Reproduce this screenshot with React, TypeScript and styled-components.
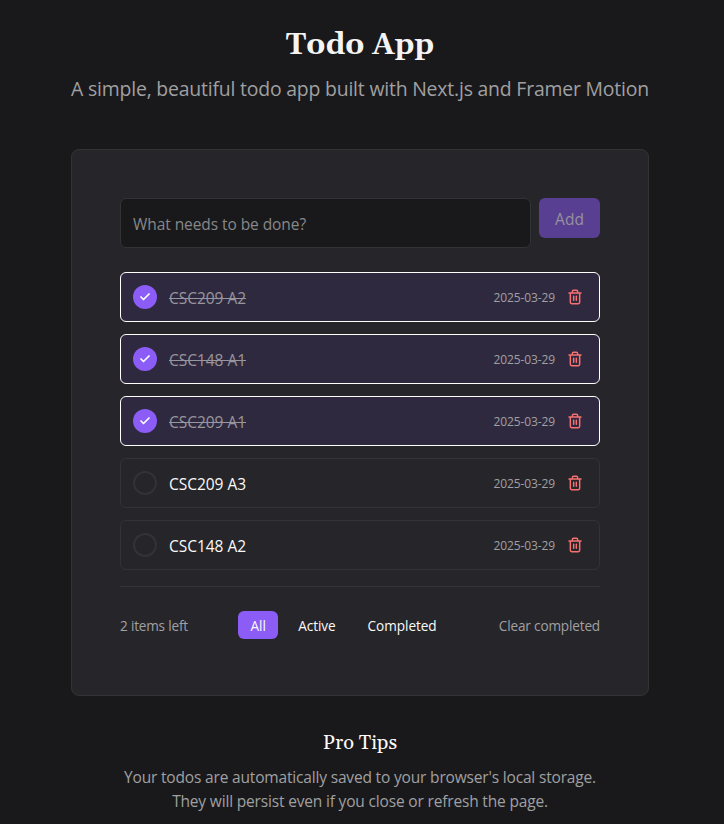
import React, { useState } from 'react';
import styled, { createGlobalStyle, css } from 'styled-components';

const GlobalStyle = createGlobalStyle`
  * { box-sizing: border-box; }
  body {
    margin: 0;
    background: #19191b;
    color: #fafafa;
    font-family: 'Open Sans', 'Noto Sans', sans-serif;
    font-size: 15.5px;
    line-height: 24px;
  }
  button, input { font: inherit; color: inherit; }
  button { border: 0; background: none; padding: 0; }
  h1, h2, p, ul { margin: 0; padding: 0; }
`;

const Page = styled.div`
  width: 720px;
  height: 824px;
  overflow: hidden;
  display: flex;
  flex-direction: column;
  align-items: center;
  padding-top: 25px;
`;

const Header = styled.header`
  display: flex;
  flex-direction: column;
  align-items: center;
  gap: 9px;
  margin-bottom: 45px;
  white-space: nowrap;
`;

const Title = styled.h1`
  font: bold 30px/40px Gelasio, 'Liberation Serif', serif;
  color: #f4f4f5;
`;

const Subtitle = styled.p`
  font-size: 19.4px;
  line-height: 30px;
  letter-spacing: -0.187px;
  color: #a0a0a2;
`;

const Card = styled.main`
  width: 578px;
  height: 547px;
  padding: 48px;
  border: 1px solid #333336;
  border-radius: 8px;
  background: #26252a;
`;

const Form = styled.form`
  display: flex;
  align-items: flex-start;
  gap: 8px;
  margin-bottom: 24px;
`;

const Input = styled.input`
  flex: 1;
  min-width: 0;
  height: 50px;
  padding: 2px 12px 0;
  border: 1px solid #333336;
  border-radius: 6px;
  background: #19191b;
  letter-spacing: -0.07px;
  outline: none;
  &::placeholder { color: #87878a; opacity: 1; }
`;

const AddButton = styled.button`
  width: 61px;
  height: 40px;
  padding-top: 2px;
  border-radius: 6px;
  background: #593f91;
  color: #96919f;
`;

const List = styled.ul`
  display: flex;
  flex-direction: column;
  gap: 12px;
  list-style: none;
`;

const Item = styled.li<{ $done: boolean }>`
  display: flex;
  align-items: center;
  height: 50px;
  padding: 0 12px;
  border: 1px solid ${p => (p.$done ? '#fff' : '#333336')};
  border-radius: 6px;
  background: ${p => (p.$done ? '#2f293f' : 'transparent')};
`;

const Check = styled.button<{ $done: boolean }>`
  display: grid;
  place-items: center;
  width: 24px;
  height: 24px;
  border-radius: 50%;
  color: #fff;
  ${p => (p.$done
    ? css`background: #8b5cf6;`
    : css`border: 2px solid #333336;`)}
`;

const Label = styled.span<{ $done: boolean }>`
  flex: 1;
  margin-left: 12px;
  padding-top: 2px;
  letter-spacing: -0.03px;
  color: ${p => (p.$done ? '#97959d' : '#fafafa')};
  text-decoration: ${p => (p.$done ? 'line-through' : 'none')};
`;

const DateText = styled.time`
  margin-right: 12px;
  padding-top: 1px;
  font-size: 12px;
  line-height: 16px;
  letter-spacing: -0.1px;
  color: #a0a0a2;
`;

const DeleteButton = styled.button`
  display: flex;
  margin-right: 4px;
  color: #f87171;
`;

const Footer = styled.footer`
  display: flex;
  align-items: center;
  justify-content: space-between;
  margin-top: 16px;
  padding-top: 24px;
  border-top: 1px solid #333336;
  font-size: 13.6px;
  line-height: 20px;
  letter-spacing: -0.15px;
  color: #a0a0a2;
`;

const Count = styled.span`
  padding-top: 2px;
  letter-spacing: -0.2px;
`;

const Filters = styled.div`
  display: flex;
  gap: 8px;
`;

const Filter = styled.button<{ $active: boolean }>`
  min-width: 40px;
  height: 28px;
  padding: 2px 12px 0;
  border-radius: 6px;
  letter-spacing: -0.06px;
  color: #fafafa;
  background: ${p => (p.$active ? '#8b5cf6' : 'transparent')};
`;

const ClearButton = styled.button`
  padding-top: 2px;
  letter-spacing: -0.17px;
`;

const Tips = styled.section`
  display: flex;
  flex-direction: column;
  align-items: center;
  margin-top: 33px;
  white-space: nowrap;
`;

const TipsTitle = styled.h2`
  margin-bottom: 8px;
  font: 400 20px/28px Gelasio, 'Liberation Serif', serif;
`;

const TipLine = styled.p`
  letter-spacing: -0.17px;
  color: #a0a0a2;
`;

const CheckIcon = () => (
  <svg width="12" height="12" viewBox="0 0 24 24" fill="none" stroke="currentColor" strokeWidth="3.4" strokeLinecap="round" strokeLinejoin="round">
    <path d="M20 6 9 17l-5-5" />
  </svg>
);

const TrashIcon = () => (
  <svg width="16" height="16" viewBox="0 0 24 24" fill="none" stroke="currentColor" strokeWidth="2.2" strokeLinecap="round" strokeLinejoin="round">
    <path d="M3 6h18M19 6v14a2 2 0 0 1-2 2H7a2 2 0 0 1-2-2V6M8 6V4a2 2 0 0 1 2-2h4a2 2 0 0 1 2 2v2M10 11v6M14 11v6" />
  </svg>
);

const initialTodos = [
  { id: 1, text: 'CSC209 A2', done: true },
  { id: 2, text: 'CSC148 A1', done: true },
  { id: 3, text: 'CSC209 A1', done: true },
  { id: 4, text: 'CSC209 A3', done: false },
  { id: 5, text: 'CSC148 A2', done: false },
];

const filters = ['All', 'Active', 'Completed'];

export default function App() {
  const [todos, setTodos] = useState(initialTodos);
  const [filter, setFilter] = useState('All');
  const shown = todos.filter(t => filter === 'All' || t.done === (filter === 'Completed'));
  const toggle = (id: number) => setTodos(ts => ts.map(t => (t.id === id ? { ...t, done: !t.done } : t)));
  const remove = (id: number) => setTodos(ts => ts.filter(t => t.id !== id));

  return (
    <>
      <GlobalStyle />
      <Page>
        <Header>
          <Title>Todo App</Title>
          <Subtitle>A simple, beautiful todo app built with Next.js and Framer Motion</Subtitle>
        </Header>
        <Card>
          <Form onSubmit={e => e.preventDefault()}>
            <Input placeholder="What needs to be done?" />
            <AddButton disabled>Add</AddButton>
          </Form>
          <List>
            {shown.map(t => (
              <Item key={t.id} $done={t.done}>
                <Check $done={t.done} onClick={() => toggle(t.id)} aria-label="Toggle">
                  {t.done && <CheckIcon />}
                </Check>
                <Label $done={t.done}>{t.text}</Label>
                <DateText>2025-03-29</DateText>
                <DeleteButton onClick={() => remove(t.id)} aria-label="Delete">
                  <TrashIcon />
                </DeleteButton>
              </Item>
            ))}
          </List>
          <Footer>
            <Count>{todos.filter(t => !t.done).length} items left</Count>
            <Filters>
              {filters.map(f => (
                <Filter key={f} $active={f === filter} onClick={() => setFilter(f)}>{f}</Filter>
              ))}
            </Filters>
            <ClearButton onClick={() => setTodos(ts => ts.filter(t => !t.done))}>Clear completed</ClearButton>
          </Footer>
        </Card>
        <Tips>
          <TipsTitle>Pro Tips</TipsTitle>
          <TipLine>Your todos are automatically saved to your browser's local storage.</TipLine>
          <TipLine>They will persist even if you close or refresh the page.</TipLine>
        </Tips>
      </Page>
    </>
  );
}
